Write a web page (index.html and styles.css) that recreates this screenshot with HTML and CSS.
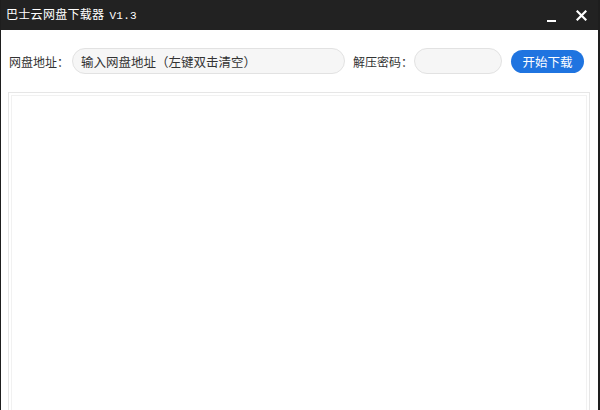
FILE: index.html
```html
<!DOCTYPE html>
<html lang="zh-CN">
<head>
<meta charset="utf-8">
<title>巴士云网盘下载器</title>
<link rel="stylesheet" href="styles.css">
</head>
<body>
<div class="window">
  <div class="titlebar">
    <div class="title">巴士云网盘下载器 <span class="ver">V1.3</span></div>
    <div class="controls">
      <span class="btn-min"><svg width="11" height="11" viewBox="0 0 11 11"><rect x="1" y="7" width="9" height="2" fill="#fff"/></svg></span>
      <span class="btn-close"><svg width="11" height="11" viewBox="0 0 11 11"><path d="M1.5 1.5 L9.5 9.5 M9.5 1.5 L1.5 9.5" stroke="#fff" stroke-width="2.2" stroke-linecap="square"/></svg></span>
    </div>
  </div>
  <div class="content">
    <div class="form-row">
      <label class="label">网盘地址：</label>
      <div class="input url">输入网盘地址（左键双击清空）</div>
      <label class="label pw-label">解压密码：</label>
      <div class="input pw"></div>
      <button class="start">开始下载</button>
    </div>
    <div class="log"><div class="log-inner"></div></div>
  </div>
</div>
</body>
</html>
```
FILE: styles.css
```css
html, body {
  margin: 0;
  padding: 0;
  width: 600px;
  height: 410px;
  overflow: hidden;
  background: #fff;
  font-family: "Noto Sans CJK SC", "Noto Sans", sans-serif;
}
.window {
  width: 600px;
  height: 410px;
  box-sizing: border-box;
  border-left: 1px solid #1e1e1e;
  border-right: 2px solid #1e1e1e;
  display: flex;
  flex-direction: column;
}
.titlebar {
  height: 30px;
  flex: none;
  background: #222222;
  display: flex;
  align-items: center;
  justify-content: space-between;
  padding: 0 0 0 5px;
}
.title {
  color: #fff;
  font-size: 12px;
  line-height: 14px;
  letter-spacing: 0.3px;
  white-space: nowrap;
}
.ver {
  font-family: "Liberation Mono", "DejaVu Sans Mono", monospace;
  font-size: 11px;
  margin-left: 2px;
}
.controls {
  display: flex;
  align-items: center;
  gap: 19px;
  margin-right: 11px;
}
.btn-min, .btn-close {
  display: flex;
  width: 11px;
  height: 11px;
}
.btn-min { margin-top: 6px; }
.btn-close { margin-top: 0; }
.content {
  flex: 1;
  display: flex;
  flex-direction: column;
  padding: 18px 8px 0 7px;
  min-height: 0;
}
.form-row {
  display: flex;
  align-items: center;
  height: 26px;
}
.label {
  flex: none;
  white-space: nowrap;
  font-size: 12px;
  color: #333;
  margin-left: 1px;
}
.input {
  flex: none;
  box-sizing: border-box;
  height: 26px;
  border: 1px solid #e2e2e2;
  background: #f6f6f6;
  border-radius: 13px;
  font-size: 12.5px;
  color: #333;
  display: flex;
  align-items: center;
  white-space: nowrap;
}
.url {
  width: 273px;
  margin-left: 3px;
  padding-left: 8px;
}
.pw-label {
  margin-left: 8px;
}
.pw {
  width: 88px;
  margin-left: 1px;
}
.start {
  flex: none;
  margin-left: 9px;
  width: 73px;
  height: 23px;
  border: none;
  border-radius: 12px;
  background: #1f74e0;
  color: #fff;
  font-family: "Noto Sans CJK SC", sans-serif;
  font-size: 12.5px;
  padding: 0;
  line-height: 23px;
}
.log {
  margin-top: 18px;
  flex: 1;
  border: 1px solid #e6e6e6;
  border-bottom: none;
  padding: 2px 2px 0 2px;
  display: flex;
}
.log-inner {
  flex: 1;
  border: 1px solid #f1f1f1;
  border-bottom: none;
}
```
